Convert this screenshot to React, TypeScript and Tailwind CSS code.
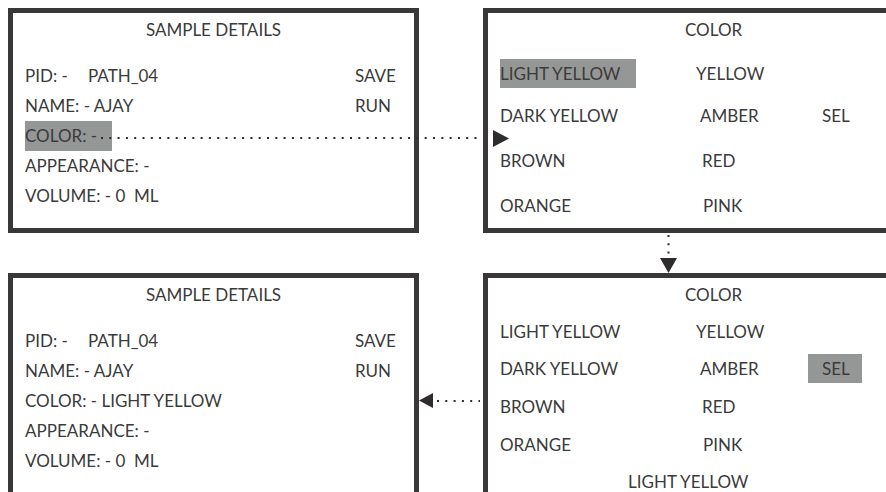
import React from "react";

const HL = "bg-[#959797]";

function DetailsBox({ colorValue, highlight }: { colorValue: string; highlight: boolean }) {
  return (
    <div className="border-[5px] border-[#3a3739] bg-white">
      <div className="mt-[2px] h-[30px] leading-[30px] text-center">SAMPLE DETAILS</div>
      <div className="mt-[16px] pl-[12px] grid grid-cols-[330px_auto] auto-rows-[30px] leading-[30px]">
        <div className="whitespace-pre">
          <span className="inline-block w-[63px]">PID: -</span>PATH_04
        </div>
        <div>SAVE</div>
        <div>NAME: - AJAY</div>
        <div>RUN</div>
        <div className="whitespace-pre">
          {highlight ? (
            <span className={`inline-block w-[87px] h-[30px] ${HL}`}>COLOR: -</span>
          ) : (
            <span>COLOR: - {colorValue}</span>
          )}
        </div>
        <div />
        <div>APPEARANCE: -</div>
        <div />
        <div className="whitespace-pre">VOLUME: - 0  ML</div>
        <div />
      </div>
    </div>
  );
}

type Row = { a: string; b: string; bOff: string; sel?: boolean; mt: string };

function ColorBox({
  rows,
  lightHL,
  selHL,
  footer,
}: {
  rows: Row[];
  lightHL: boolean;
  selHL: boolean;
  footer: boolean;
}) {
  return (
    <div className="border-[5px] border-r-0 border-[#3a3739] bg-white">
      <div className="mt-[2px] h-[30px] leading-[30px] pl-[197px]">COLOR</div>
      {rows.map((r, i) => (
        <div key={i} className={`flex h-[29px] leading-[29px] pl-[12px] ${r.mt}`}>
          <div className="w-[196px] shrink-0">
            {i === 0 && lightHL ? (
              <span className={`inline-block w-[136px] ${HL}`}>{r.a}</span>
            ) : (
              r.a
            )}
          </div>
          <div className={`w-[112px] shrink-0 ${r.bOff}`}>{r.b}</div>
          {r.sel ? (
            <div className={`w-[54px] shrink-0 pl-[14px] ${selHL ? HL : ""}`}>SEL</div>
          ) : null}
        </div>
      ))}
      {footer ? (
        <div className="mt-[8px] h-[29px] leading-[29px] pl-[140px]">LIGHT YELLOW</div>
      ) : null}
    </div>
  );
}

export default function App() {
  const topRows: Row[] = [
    { a: "LIGHT YELLOW", b: "YELLOW", bOff: "pl-0", mt: "mt-[14px]" },
    { a: "DARK YELLOW", b: "AMBER", bOff: "pl-[4px]", sel: true, mt: "mt-[13px]" },
    { a: "BROWN", b: "RED", bOff: "pl-[6px]", mt: "mt-[16px]" },
    { a: "ORANGE", b: "PINK", bOff: "pl-[7px]", mt: "mt-[16px]" },
  ];
  const bottomRows: Row[] = [
    { a: "LIGHT YELLOW", b: "YELLOW", bOff: "pl-0", mt: "mt-[7px]" },
    { a: "DARK YELLOW", b: "AMBER", bOff: "pl-[4px]", sel: true, mt: "mt-[8px]" },
    { a: "BROWN", b: "RED", bOff: "pl-[6px]", mt: "mt-[9px]" },
    { a: "ORANGE", b: "PINK", bOff: "pl-[7px]", mt: "mt-[9px]" },
  ];
  return (
    <div className="relative w-[886px] h-[492px] overflow-hidden bg-white text-[17px] text-[#3b3b3b] [font-family:Lato,'Open_Sans',sans-serif]">
      <div className="grid grid-cols-[411px_420px] grid-rows-[225px_260px] gap-x-[64px] gap-y-[40px] pl-[8px] pt-[8px]">
        <DetailsBox colorValue="" highlight={true} />
        <ColorBox rows={topRows} lightHL={true} selHL={false} footer={false} />
        <DetailsBox colorValue="LIGHT YELLOW" highlight={false} />
        <ColorBox rows={bottomRows} lightHL={false} selHL={true} footer={true} />
      </div>
      <svg className="absolute inset-0 pointer-events-none" width="886" height="492" viewBox="0 0 886 492">
        <g stroke="#2f2c2e" strokeWidth="2" fill="none">
          <line x1="101" y1="138" x2="480" y2="138" strokeDasharray="2 6.3" />
          <line x1="668.5" y1="235" x2="668.5" y2="256" strokeDasharray="2 6.3" />
          <line x1="437" y1="401" x2="480" y2="401" strokeDasharray="2 6.3" />
        </g>
        <g fill="#2f2c2e">
          <polygon points="493,130 509,138.5 493,147" />
          <polygon points="660,258 677,258 668.5,273" />
          <polygon points="433,393 433,408 419,400.5" />
        </g>
      </svg>
    </div>
  );
}
